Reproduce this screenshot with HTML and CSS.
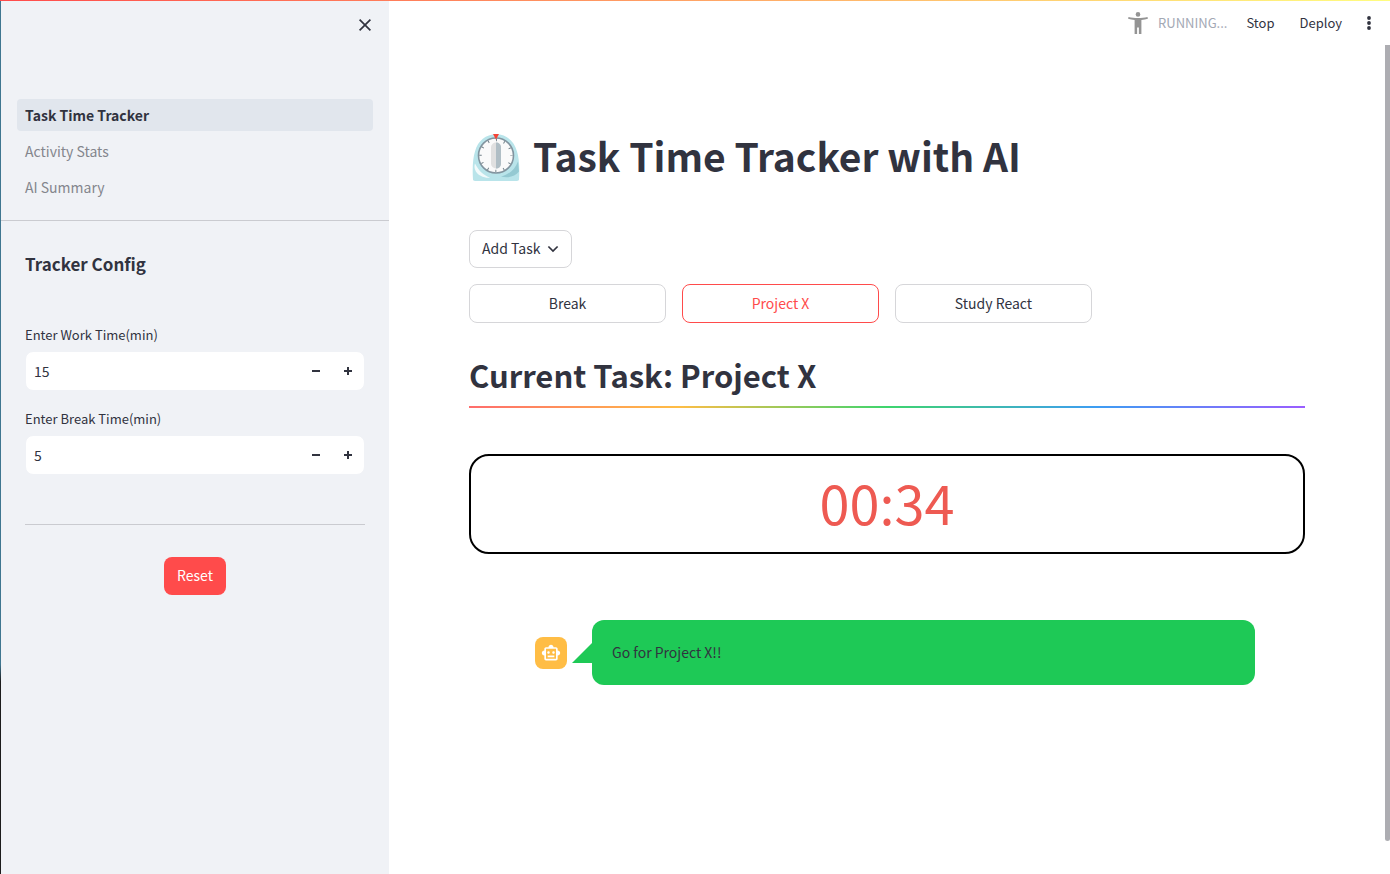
FILE: index.html
```html
<!DOCTYPE html>
<html lang="en">
<head>
<meta charset="utf-8">
<meta name="viewport" content="width=device-width, initial-scale=1">
<title>Task Time Tracker</title>
<link rel="stylesheet" href="styles.css">
</head>
<body>
<div class="decoration"></div>
<div class="app">
  <div class="edge"></div>
  <aside class="sidebar">
    <div class="sidebar-header">
      <button class="icon-button" type="button" aria-label="Close sidebar">
        <svg width="20" height="20" viewBox="0 0 20 20" fill="none" stroke="#31333f" stroke-width="1.7"><path d="M4.6 4.6l10.8 10.8M15.4 4.6L4.600 15.4"/></svg>
      </button>
    </div>
    <nav class="nav">
      <a class="nav-link active" href="#">Task Time Tracker</a>
      <a class="nav-link" href="#">Activity Stats</a>
      <a class="nav-link" href="#">AI Summary</a>
    </nav>
    <div class="config">
      <h2 class="config-title">Tracker Config</h2>
      <div class="field">
        <label class="field-label" for="work">Enter Work Time(min)</label>
        <div class="stepper">
          <input class="stepper-input" id="work" type="number" value="15">
          <button class="step" type="button" aria-label="Decrease work time"><svg width="8" height="8" viewBox="0 0 8 8"><path d="M0 3h8v2H0z" fill="#31333f"/></svg></button>
          <button class="step" type="button" aria-label="Increase work time"><svg width="8" height="8" viewBox="0 0 8 8"><path d="M0 3h3V0h2v3h3v2H5v3H3V5H0z" fill="#31333f"/></svg></button>
        </div>
      </div>
      <div class="field">
        <label class="field-label" for="rest">Enter Break Time(min)</label>
        <div class="stepper">
          <input class="stepper-input" id="rest" type="number" value="5">
          <button class="step" type="button" aria-label="Decrease break time"><svg width="8" height="8" viewBox="0 0 8 8"><path d="M0 3h8v2H0z" fill="#31333f"/></svg></button>
          <button class="step" type="button" aria-label="Increase break time"><svg width="8" height="8" viewBox="0 0 8 8"><path d="M0 3h3V0h2v3h3v2H5v3H3V5H0z" fill="#31333f"/></svg></button>
        </div>
      </div>
      <hr class="rule">
      <button class="reset" type="button">Reset</button>
    </div>
  </aside>
  <div class="main">
    <header class="toolbar">
      <svg class="runner" width="20" height="22" viewBox="0 0 20 22" fill="#949494"><circle cx="10" cy="2.400" r="2.300"/><path d="M.5 4.900C3.500 5.700 6.500 6 10 6s6.500-.3 9.500-1.100l.4 1.900c-2 .6-4.200 1-6.500 1.200V22h-2.500v-6.400H9.100V22H6.600V8C4.300 7.800 2.100 7.400.1 6.800z"/></svg>
      <span class="status">RUNNING...</span>
      <button class="tool stop" type="button">Stop</button>
      <button class="tool" type="button">Deploy</button>
      <button class="icon-button menu" type="button" aria-label="Main menu">
        <svg width="6" height="16" viewBox="0 0 6 16" fill="#31333f"><circle cx="3" cy="3" r="1.900"/><circle cx="3" cy="8" r="1.900"/><circle cx="3" cy="13" r="1.900"/></svg>
      </button>
    </header>
    <div class="scroll-area">
      <main class="content">
        <h1 class="title">
          <svg class="clock" width="54" height="48" viewBox="0 -.5 54 48">
            <path d="M4 46C3.200 34 4 24 6 18 9 7 17 .8 27 .8S45 7 48 18c2 6 2.800 16 2 28-.1 1-1 1.400-2 1.400H6c-1 0-1.900-.4-2-1.400z" fill="#b9e4ea"/>
            <path d="M6 30c4 8 9 12 15 14-3 1-13-1-15-8-.6-2-.7-4 0-6z" fill="#f2fafb"/>
            <path d="M49 28c-3 8-9 13-17 15 7 2 14 0 18-5z" fill="#94c9d2"/>
            <circle cx="27" cy="22" r="17.500" fill="#fafafa" stroke="#82949f" stroke-width="1.600"/>
            <circle cx="27" cy="22" r="15.500" fill="none" stroke="#718088" stroke-width="2.500" stroke-dasharray="1 7.116" stroke-dashoffset=".5"/>
            <rect x="22" y="9" width="10" height="26" rx="5" fill="#e0e0e0"/>
            <path d="M27 9c3 0 5 2 5 5v16c0 3-2 5-5 5z" fill="#b0bec5"/>
            <path d="M24 .5h6L27 6z" fill="#f44336"/>
          </svg>
          <span class="title-text">Task Time Tracker with AI</span>
        </h1>
        <button class="button add" type="button">Add Task
          <svg width="12" height="10" viewBox="0 0 12 10" fill="none" stroke="#31333f" stroke-width="1.700"><path d="M1.400 3.500L6 8l4.600-4.500"/></svg>
        </button>
        <div class="tasks">
          <button class="button" type="button">Break</button>
          <button class="button selected" type="button">Project X</button>
          <button class="button" type="button">Study React</button>
        </div>
        <h2 class="current">Current Task: Project X</h2>
        <div class="rainbow"></div>
        <div class="timer">00:34</div>
        <div class="chat">
          <div class="avatar">
            <svg width="20" height="20" viewBox="0 0 24 24" fill="#fff"><path d="M20 9V7c0-1.100-.9-2-2-2h-3c0-1.660-1.340-3-3-3S9 3.340 9 5H6c-1.100 0-2 .9-2 2v2c-1.660 0-3 1.340-3 3s1.340 3 3 3v4c0 1.100.9 2 2 2h12c1.100 0 2-.9 2-2v-4c1.660 0 3-1.340 3-3s-1.340-3-3-3zm-2 10H6V7h12v12zm-9-6c-.83 0-1.500-.67-1.500-1.500S8.170 10 9 10s1.500.67 1.500 1.500S9.830 13 9 13zm7.500-1.500c0 .83-.67 1.500-1.500 1.500s-1.500-.67-1.500-1.500.67-1.500 1.500-1.500 1.500.67 1.500 1.500zM8 15h8v2H8v-2z"/></svg>
          </div>
          <svg class="tail" width="20" height="20" viewBox="0 0 20 20"><path d="M20 0v20H0z" fill="#1ec956"/></svg>
          <div class="bubble">Go for Project X!!</div>
        </div>
      </main>
      <div class="track"><div class="thumb"></div></div>
    </div>
  </div>
</div>
</body>
</html>
```
FILE: styles.css
```css
* { box-sizing: border-box; }

body {
  margin: 0;
  background: #fff;
  color: #31333f;
  font-family: "Noto Sans CJK SC", "Noto Sans", sans-serif;
  font-size: 14px;
  line-height: 24px;
}

button, input {
  margin: 0;
  padding: 0;
  border: 0;
  background: none;
  color: inherit;
  font: inherit;
}

button { cursor: pointer; }
svg { display: block; flex: none; }
h1, h2 { margin: 0; }

.decoration {
  position: absolute;
  top: 0;
  left: 0;
  right: 0;
  height: 1px;
  background: linear-gradient(90deg, #ff4b4b, #fffd80);
}

.app { display: flex; min-height: 100vh; }

.edge {
  flex: none;
  width: 1px;
  background: linear-gradient(#3f7690 76%, #1c1c1c 78%);
}

.sidebar {
  flex: none;
  width: 388px;
  background: #f0f2f6;
}

.sidebar-header {
  display: flex;
  justify-content: flex-end;
  padding: 15px 14px 0;
  height: 99px;
}

.icon-button {
  display: flex;
  align-items: center;
  justify-content: center;
  height: 20px;
}

.nav {
  display: flex;
  flex-direction: column;
  gap: 4px;
  padding: 0 16px 17px;
  border-bottom: 1px solid #cacbd0;
}

.nav-link {
  padding: 4px 8px;
  border-radius: 4px;
  color: #84868d;
  text-decoration: none;
}

.nav-link.active {
  background: #e1e6ed;
  color: #31333f;
  font-weight: 600;
}

.config {
  display: flex;
  flex-direction: column;
  padding: 32px 24px;
}

.config-title {
  margin-bottom: 50px;
  font-size: 17px;
  line-height: 22px;
  font-weight: 700;
}

.field { margin-bottom: 18px; }

.field-label {
  display: block;
  margin-bottom: 6px;
  font-size: 13px;
  line-height: 20px;
}

.stepper {
  display: flex;
  height: 40px;
  border: 1px solid #f0f2f6;
  border-radius: 8px;
  background: #fff;
  overflow: hidden;
}

.stepper-input {
  flex: 1;
  min-width: 0;
  padding: 0 8px;
  appearance: textfield;
}

.stepper-input::-webkit-inner-spin-button { appearance: none; }

.step {
  display: flex;
  align-items: center;
  justify-content: center;
  width: 32px;
}

.rule {
  width: 100%;
  margin: 31px 0 32px;
  border: 0;
  border-top: 1px solid #cacbd0;
}

.reset {
  align-self: center;
  padding: 6px 13px 8px;
  border-radius: 8px;
  background: #ff4b4b;
  color: #fff;
}

.main {
  display: flex;
  flex: 1;
  flex-direction: column;
  min-width: 0;
}

.toolbar {
  display: flex;
  align-items: center;
  justify-content: flex-end;
  height: 45px;
  padding-right: 18px;
  font-size: 13px;
  line-height: 20px;
}

.status { margin: 0 19px 0 10px; color: #a3a8b4; }
.stop { margin-right: 25px; }
.menu { margin-left: 24px; }
.runner { margin-left: auto; }

.scroll-area { display: flex; flex: 1; }

.content {
  flex: 1;
  min-width: 0;
  padding: 86px 80px;
}

.title {
  display: flex;
  align-items: center;
  gap: 10px;
  margin-bottom: 47px;
  font-size: 39px;
  line-height: 49px;
  font-weight: 700;
}

.title-text { padding-bottom: 3px; }

.button {
  padding: 6px 12px;
  border: 1px solid #d6d6d9;
  border-radius: 8px;
}

.button.selected { border-color: #ff4b4b; color: #ff4b4b; }

.add {
  display: flex;
  align-items: center;
  gap: 7px;
  padding: 5px 12px 7px;
}

.tasks {
  display: grid;
  grid-template-columns: repeat(4, 1fr);
  gap: 16px;
  margin: 16px 0 32px;
  line-height: 25px;
}

.current {
  margin-bottom: 11px;
  font-size: 31px;
  line-height: 40px;
  font-weight: 700;
}

.rainbow {
  height: 2px;
  background: linear-gradient(90deg, #ff6c6c, #ffbd45, #3dd56d, #3d9df3, #9a5dff);
}

.timer {
  margin: 46px 0 66px;
  padding: 6px 8px 10px;
  border: 2px solid #000;
  border-radius: 20px;
  color: #ee5a52;
  font-size: 54px;
  line-height: 80px;
  text-align: center;
}

.chat {
  display: flex;
  align-items: center;
  padding: 0 50px 0 66px;
}

.avatar {
  display: flex;
  align-items: center;
  justify-content: center;
  width: 32px;
  height: 32px;
  margin-right: 5px;
  border-radius: 8px;
  background: #ffbd45;
}

.bubble {
  flex: 1;
  padding: 20px;
  border-radius: 12px;
  background: #1ec956;
  line-height: 25px;
}

.track { width: 5px; }
.thumb { height: 96%; border-radius: 0 0 3px 3px; background: #adadb2; }
```
